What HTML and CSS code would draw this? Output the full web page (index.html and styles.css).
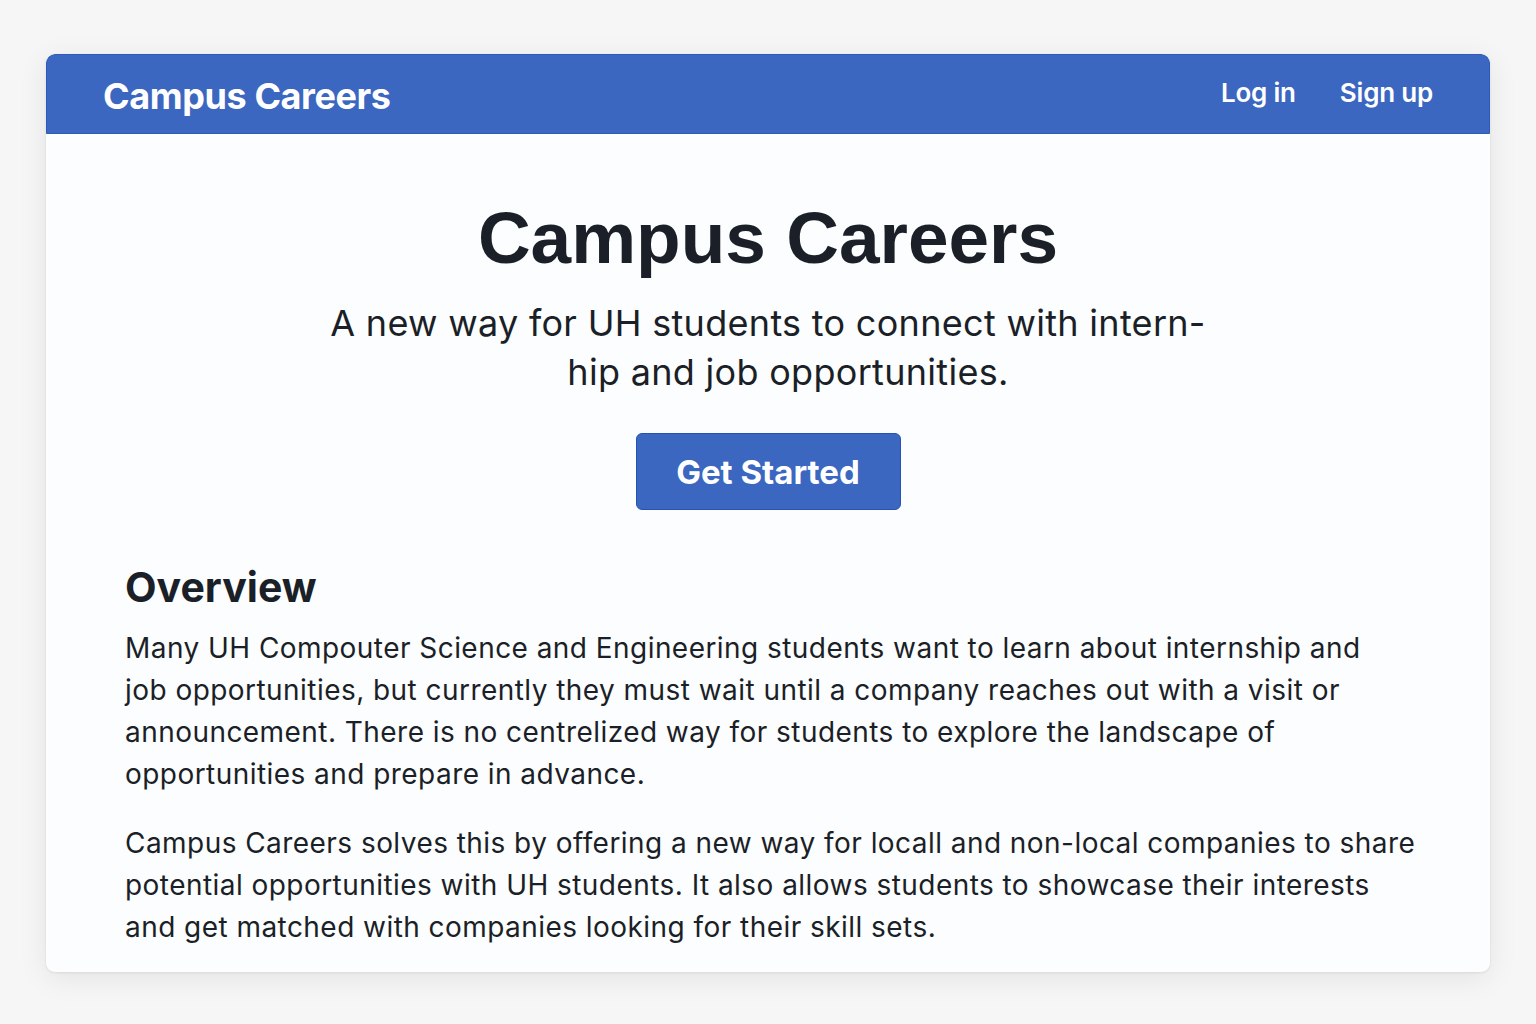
FILE: index.html
```html
<!DOCTYPE html>
<html lang="en">
<head>
<meta charset="utf-8">
<title>Campus Careers</title>
<link rel="stylesheet" href="styles.css">
</head>
<body>
<div class="card">
  <header class="navbar">
    <a class="brand" href="#">Campus Careers</a>
    <nav class="nav-links">
      <a href="#">Log in</a>
      <a href="#">Sign up</a>
    </nav>
  </header>
  <main class="content">
    <section class="hero">
      <h1 class="hero-title">Campus Careers</h1>
      <p class="hero-sub">A new way for UH students to connect with intern-<br><span class="sub-second">hip and job opportunities.</span></p>
      <a class="btn" href="#">Get Started</a>
    </section>
    <section class="overview">
      <h2 class="overview-title">Overview</h2>
      <p class="para">Many UH Compouter Science and Engineering students want to learn about internship and<br>job opportunities, but currently they must wait until a company reaches out with a visit or<br>announcement. There is no centrelized way for students to explore the landscape of<br>opportunities and prepare in advance.</p>
      <p class="para">Campus Careers solves this by offering a new way for locall and non-local companies to share<br>potential opportunities with UH students. It also allows students to showcase their interests<br>and get matched with companies looking for their skill sets.</p>
    </section>
  </main>
</div>
</body>
</html>
```

FILE: styles.css
```css
* { box-sizing: border-box; }
html, body { margin: 0; padding: 0; }
body {
  background: #f6f6f6;
  font-family: Inter, "Noto Sans", sans-serif;
  color: #1b1f27;
  padding: 54px 46px 0 46px;
  height: 1024px;
}
.card {
  background: #fcfdfe;
  border-radius: 9px;
  box-shadow: 0 6px 30px rgba(0,0,0,0.08), 0 1px 3px rgba(0,0,0,0.08);
  height: 918px;
  overflow: hidden;
}
.navbar {
  height: 80px;
  background: #3b67c0;
  border: 1px solid #2d5bbb;
  border-radius: 9px 9px 0 0;
  display: flex;
  align-items: center;
  justify-content: space-between;
  padding: 0 56px 0 56px;
}
.brand {
  color: #fff;
  text-decoration: none;
  font-family: Inter, sans-serif;
  font-weight: 700;
  font-size: 36px;
  letter-spacing: -0.4px;
  margin-top: 3px;
}
.nav-links { display: flex; gap: 44px; margin-top: -3px; }
.nav-links a {
  color: #fff;
  text-decoration: none;
  font-weight: 600;
  font-size: 26px;
  letter-spacing: -0.2px;
}
.content { padding: 0 40px 0 79px; }
.hero {
  display: flex;
  flex-direction: column;
  align-items: center;
  text-align: center;
  padding-right: 39px;
}
.hero-title {
  margin: 64px 0 0;
  font-family: "Liberation Sans", Arial, sans-serif;
  font-weight: 700;
  font-size: 73px;
  line-height: 80px;
  color: #1b1f27;
}
.hero-sub {
  margin: 21px 0 0;
  font-size: 36px;
  line-height: 49px;
  font-weight: 400;
  letter-spacing: 0.3px;
  color: #1b1f27;
}
.sub-second { padding-left: 40px; }
.btn {
  margin-top: 36px;
  width: 265px;
  height: 77px;
  display: flex;
  align-items: center;
  justify-content: center;
  background: #3b67c0;
  border: 1px solid #2553b5;
  border-radius: 6px;
  color: #fff;
  text-decoration: none;
  font-weight: 700;
  font-size: 33px;
}
.overview { margin-top: 52px; }
.overview-title {
  margin: 0;
  font-size: 41px;
  line-height: 50px;
  font-weight: 700;
  color: #1b1f27;
}
.para {
  margin: 15px 0 0;
  font-size: 28px;
  line-height: 42px;
  letter-spacing: 0.45px;
  color: #1b1f27;
}
.para + .para { margin-top: 27px; }
```
